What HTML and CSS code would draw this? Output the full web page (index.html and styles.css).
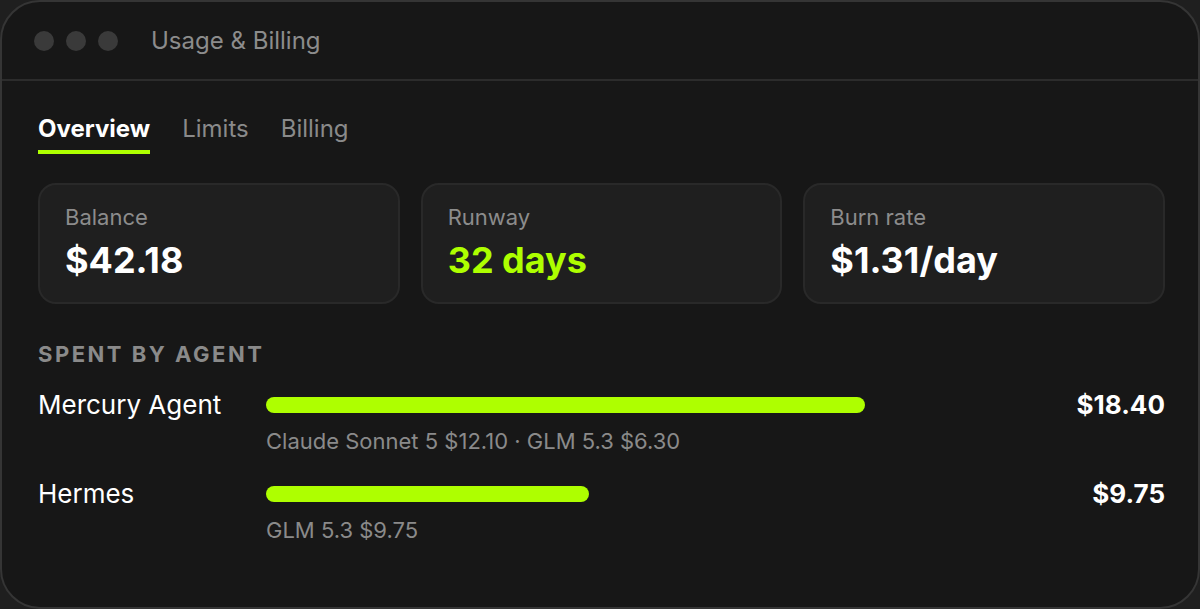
FILE: index.html
```html
<!DOCTYPE html>
<html>
<head>
<meta charset="utf-8">
<link rel="stylesheet" href="styles.css">
</head>
<body>
<div class="window">
  <div class="titlebar">
    <div class="lights"><span class="light"></span><span class="light"></span><span class="light"></span></div>
    <div class="title">Usage &amp; Billing</div>
  </div>
  <div class="content">
    <nav class="tabs">
      <span class="tab active">Overview</span>
      <span class="tab">Limits</span>
      <span class="tab">Billing</span>
    </nav>
    <div class="cards">
      <div class="card"><div class="card-label">Balance</div><div class="card-value">$42.18</div></div>
      <div class="card"><div class="card-label">Runway</div><div class="card-value lime">32 days</div></div>
      <div class="card"><div class="card-label">Burn rate</div><div class="card-value">$1.31/day</div></div>
    </div>
    <div class="section-title">SPENT BY AGENT</div>
    <div class="agents">
      <div class="agent">
        <div class="agent-name">Mercury Agent</div>
        <div class="agent-body">
          <div class="bar-row"><div class="bar" style="width:599px"></div></div>
          <div class="agent-sub">Claude Sonnet 5 $12.10 · GLM 5.3 $6.30</div>
        </div>
        <div class="agent-total">$18.40</div>
      </div>
      <div class="agent">
        <div class="agent-name">Hermes</div>
        <div class="agent-body">
          <div class="bar-row"><div class="bar" style="width:323px"></div></div>
          <div class="agent-sub">GLM 5.3 $9.75</div>
        </div>
        <div class="agent-total">$9.75</div>
      </div>
    </div>
  </div>
</div>
</body>
</html>
```
FILE: styles.css
```css
* { box-sizing: border-box; }
html, body { margin: 0; padding: 0; }
body {
  background: #1f1f1f;
  font-family: Inter, "Noto Sans", sans-serif;
  width: 1200px;
  height: 609px;
  overflow: hidden;
}
.window {
  width: 1200px;
  height: 609px;
  background: #171717;
  border: 2px solid #353535;
  border-radius: 40px;
  overflow: hidden;
}
.titlebar {
  height: 79px;
  border-bottom: 2px solid #2c2c2c;
  display: flex;
  align-items: center;
  padding-left: 32px;
}
.lights { display: flex; gap: 12px; }
.light {
  width: 20px; height: 20px; border-radius: 50%;
  background: #3a3a3a;
}
.title {
  margin-left: 33px;
  color: #8c8c8c;
  font-size: 24px;
}
.content { padding: 30px 33px 0 36px; }
.tabs { display: flex; gap: 32px; height: 43px; }
.tab {
  font-size: 24px;
  line-height: 29px;
  color: #8a8a8a;
  height: 43px;
  padding-top: 3px;
}
.tab.active {
  color: #fff;
  font-weight: 700;
  border-bottom: 4px solid #aeff00;
}
.cards {
  display: grid;
  grid-template-columns: 1fr 1fr 1fr;
  gap: 21px;
  margin-top: 29px;
}
.card {
  height: 121px;
  background: #1f1f1f;
  border: 2px solid #292929;
  border-radius: 18px;
  padding: 18px 25px;
}
.card-label { font-size: 22px; color: #8c8c8c; line-height: 28px; }
.card-value { font-size: 36px; font-weight: 700; color: #fff; margin-top: 9px; line-height: 40px; }
.card-value.lime { color: #aeff00; }
.section-title {
  margin-top: 37px;
  font-size: 22px;
  line-height: 27px;
  font-weight: 700;
  letter-spacing: 2.5px;
  color: #8a8a8a;
}
.agents { margin-top: 20px; }
.agent { display: flex; align-items: flex-start; margin-bottom: 22px; }
.agent-name { width: 228px; font-size: 26px; color: #fff; line-height: 34px; }
.agent-body { flex: 1; }
.bar-row { height: 34px; display: flex; align-items: center; }
.bar { height: 16px; border-radius: 8px; background: #aeff00; }
.agent-sub { font-size: 22px; color: #8a8a8a; margin-top: 5px; line-height: 28px; }
.agent-total { font-size: 26px; font-weight: 700; color: #fff; line-height: 34px; }
```
